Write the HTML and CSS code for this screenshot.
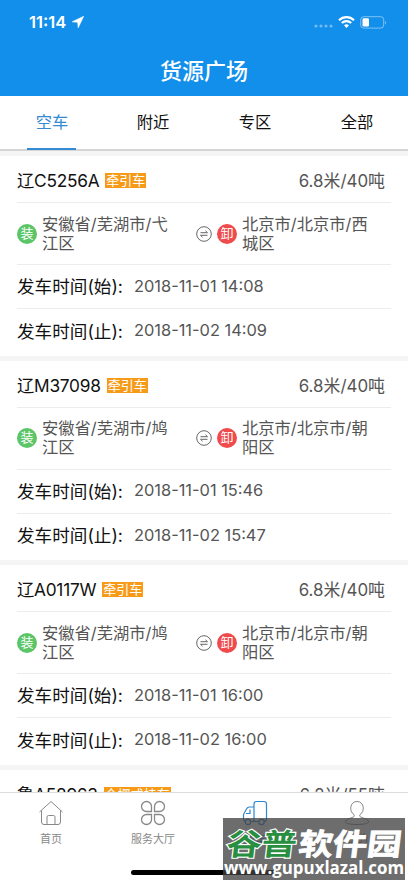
FILE: index.html
```html
<!DOCTYPE html>
<html lang="zh-CN">
<head>
<meta charset="utf-8">
<meta name="viewport" content="width=device-width">
<title>货源广场</title>
<link rel="stylesheet" href="styles.css">
</head>
<body>
<div class="app">
  <header class="header">
    <div class="status">
      <span class="time">11:14</span>
      <svg class="loc" width="12" height="12" viewBox="0 0 12 12"><path d="M11.700.3.2 5.800l5.500.5.500 5.500z" fill="#fff" stroke="#fff" stroke-width=".6"/></svg>
      <svg class="signal" width="20" height="6" viewBox="0 0 20 6" fill="#fff" opacity=".4"><circle cx="2" cy="3" r="1.6"/><circle cx="7" cy="3" r="1.6"/><circle cx="12" cy="3" r="1.6"/><circle cx="17" cy="3" r="1.6"/></svg>
      <svg class="wifi" width="17" height="12" viewBox="0 0 17 12" fill="none" stroke="#fff" stroke-width="2.2"><path d="M1 4.2a10.8 10.8 0 0 1 15 0M3.8 7a6.8 6.8 0 0 1 9.4 0"/><path d="M8.5 12 6 9.3a3.7 3.7 0 0 1 5 0z" fill="#fff" stroke="none"/></svg>
      <svg width="27" height="13" viewBox="0 0 27 13"><rect x=".7" y=".7" width="23" height="11.4" rx="3" fill="none" stroke="#fff" stroke-opacity=".45"/><rect x="2.5" y="2.3" width="6.5" height="8.2" rx="1.3" fill="#fff"/><path d="M25 4.5q1.8 2 0 4z" fill="#fff" opacity=".5"/></svg>
    </div>
    <h1 class="title">货源广场</h1>
  </header>
  <nav class="tabs">
    <div class="tab"><span class="tab-label active">空车</span></div>
    <div class="tab"><span class="tab-label">附近</span></div>
    <div class="tab"><span class="tab-label">专区</span></div>
    <div class="tab"><span class="tab-label">全部</span></div>
  </nav>
  <main class="list" id="list"></main>
  <footer class="bottom">
    <div class="nav-item"><svg width="26" height="26" viewBox="0 0 26 26"><path d="M1.500 12 13 1.500 24.500 12M3.500 10.500V22q0 2.500 2.500 2.500h14q2.500 0 2.500-2.500V10.500M9 24.500V17q0-1.500 1.500-1.500h5Q17 15.500 17 17v7.500"/></svg><span>首页</span></div>
    <div class="nav-item"><svg class="clover" width="26" height="26" viewBox="0 0 26 26"><path d="M11.500 11.500H6.500a5 5 0 1 1 5-5zM14.500 11.500V6.500a5 5 0 1 1 5 5zM11.500 14.500V19.500a5 5 0 1 1-5-5zM14.500 14.500H19.500a5 5 0 1 1-5 5z"/></svg><span>服务大厅</span></div>
    <div class="nav-item selected"><svg width="26" height="26" viewBox="0 0 26 26"><path d="M12 21V4Q12 1.500 14.500 1.500h7.500Q24.500 1.500 24.500 4v15q0 2-2.500 2.500M12 7H7.500Q5.500 7 4.500 9l-2.500 4.500Q1.500 14.500 1.500 15.500V19q0 2 2 2.500M9 21.500h7.500M8 9.500v4H4"/><circle cx="6" cy="22" r="2.700"/><circle cx="19.500" cy="22" r="2.700"/></svg><span>找车</span></div>
    <div class="nav-item"><svg width="26" height="26" viewBox="0 0 26 26"><path d="M10 14.500C5 12 5.500 1.500 13 1.500s8 10.500 3 13c-.8 2 0 2.300 2 3 4 1.300 6.500 2.500 6.500 4.500 0 1.500-5 2.500-11.500 2.500S1.500 23.500 1.500 22c0-2 2.500-3.200 6.500-4.500 2-.7 2.800-1 2-3z"/></svg><span>我的</span></div>
  </footer>
  <div class="home-bar"></div>
  <div class="watermark"><svg class="brand" width="182" height="41" viewBox="0 0 182 41"><g class="brand-text" transform="translate(5 0) skewX(-7)"><text class="green" x="2" y="37" textLength="70" lengthAdjust="spacingAndGlyphs">谷普</text><text x="74" y="37" textLength="103" lengthAdjust="spacingAndGlyphs">软件园</text></g></svg><svg class="url" width="182" height="21" viewBox="0 0 182 21"><text x="1" y="14.500" textLength="180" lengthAdjust="spacingAndGlyphs">www.gupuxlazal.com</text></svg></div>
</div>
<script src="app.js"></script>
</body>
</html>
```
FILE: app.js
```js
const trucks = [
  { plate: "辽C5256A", type: "牵引车", size: "6.8米/40吨", from: "安徽省/芜湖市/弋江区", to: "北京市/北京市/西城区", start: "2018-11-01 14:08", end: "2018-11-02 14:09" },
  { plate: "辽M37098", type: "牵引车", size: "6.8米/40吨", from: "安徽省/芜湖市/鸠江区", to: "北京市/北京市/朝阳区", start: "2018-11-01 15:46", end: "2018-11-02 15:47" },
  { plate: "辽A0117W", type: "牵引车", size: "6.8米/40吨", from: "安徽省/芜湖市/鸠江区", to: "北京市/北京市/朝阳区", start: "2018-11-01 16:00", end: "2018-11-02 16:00" },
  { plate: "鲁A58963", type: "仓栅式挂车", size: "6.2米/55吨" }
];
const swap = '<svg class="swap" width="16" height="16" viewBox="0 0 16 16"><circle cx="8" cy="8" r="7.3"/><path d="M4.500 6.700h7L9.500 4.800M11.500 9.300h-7l2 1.900"/></svg>';
document.getElementById("list").innerHTML = trucks.map(t => `
<section class="card">
  <div class="row head"><span class="plate">${t.plate}</span><span class="tag">${t.type}</span><span class="size">${t.size}</span></div>
  ${t.from ? `<div class="row route"><span class="dot load">装</span><span class="place from">${t.from}</span>${swap}<span class="dot unload">卸</span><span class="place to">${t.to}</span></div>
  <div class="row date"><span class="label">发车时间(始):</span><span class="value">${t.start}</span></div>
  <div class="row date last"><span class="label">发车时间(止):</span><span class="value">${t.end}</span></div>` : ""}
</section>`).join("");
```
FILE: styles.css
```css
* { box-sizing: border-box; }
body { margin: 0; font-family: Inter, "Noto Sans CJK SC", sans-serif; }
.app { position: relative; display: flex; flex-direction: column; width: 408px; height: 883px; overflow: hidden; background: #fff; }
.header { flex: none; height: 96px; background: #128feb; color: #fff; }
.status { display: flex; align-items: center; height: 44px; padding: 0 21px 0 29px; }
.time { width: 40px; font-size: 16.500px; font-weight: 600; white-space: nowrap; }
.loc { margin-left: 3px; }
.signal { margin: 8px 4px 0 auto; }
.wifi { margin-right: 5px; }
.title { margin: 0; height: 52px; font-size: 22px; font-weight: 500; line-height: 55px; text-align: center; }
.tabs { display: grid; grid-template-columns: repeat(4, 1fr); flex: none; height: 55px; border-bottom: 2px solid #d5d5d5; }
.tab { display: flex; justify-content: center; }
.tab-label { width: 49px; height: 54px; font-size: 16.300px; line-height: 53px; text-align: center; color: #111; }
.tab-label.active { padding-left: 2px; color: #348bd2; border-bottom: 2px solid #348bd2; }
.list { flex: 1; min-height: 0; overflow: hidden; }
.card { height: 204.700px; padding: 5px 17px 0; border-top: 5px solid #f5f5f5; }
.row { display: flex; align-items: center; border-bottom: 1px solid #ececec; }
.head { height: 42px; padding-bottom: 4px; }
.plate { font-size: 17.300px; letter-spacing: -.25px; color: #111; }
.tag { height: 15px; margin: 2px 0 0 6px; padding: 0 1px; font-size: 13px; line-height: 14px; color: #fff; background: #f79a18; }
.size { margin: 0 6px 0 auto; font-size: 16.900px; color: #555; }
.route { height: 62px; }
.dot { flex: none; width: 20px; height: 20px; border-radius: 50%; font-size: 13px; line-height: 19px; text-align: center; color: #fff; }
.load { background: #5bc568; }
.unload { margin-left: 5px; background: #ef4a4c; }
.place { font-size: 16.300px; line-height: 19px; color: #555; }
.from { width: 130px; margin-left: 5px; }
.to { width: 132px; margin-left: 5px; }
.swap { fill: none; stroke: #666; stroke-width: 1; }
.route .swap { margin-left: 24px; }
.date { height: 44px; padding-bottom: 2px; }
.last { border: 0; }
.label { width: 117px; font-size: 17.600px; color: #111; white-space: nowrap; }
.value { font-size: 16.400px; color: #555; white-space: nowrap; }
.bottom { display: grid; grid-template-columns: repeat(4, 1fr); flex: none; height: 91px; border-top: 1px solid #ddd; background: #fff; }
.nav-item { display: flex; flex-direction: column; align-items: center; padding-top: 7px; font-size: 11px; line-height: 14px; color: #888; gap: 6px; }
.nav-item svg { fill: none; stroke: #888; stroke-width: 1; }
.nav-item .clover { stroke-width: 1.300; }
.nav-item.selected { color: #2d88cf; }
.selected svg { stroke: #2d88cf; stroke-width: 1.200; }
.home-bar { position: absolute; left: 131px; bottom: 8px; width: 146px; height: 5px; border-radius: 3px; background: #000; }
.watermark { position: absolute; left: 223px; top: 818px; width: 182px; height: 62px; background: rgba(65,65,65,.77); }
.brand, .url { display: block; overflow: visible; }
.brand-text { font: 700 30px "Noto Sans CJK SC", sans-serif; fill: #fff; stroke: #fff; stroke-width: .8px; }
.brand-text .green { fill: #288e40; stroke: #fff; stroke-width: 2.200px; paint-order: stroke; }
.url text { font: 700 17px "Open Sans", sans-serif; fill: #fff; }
```
